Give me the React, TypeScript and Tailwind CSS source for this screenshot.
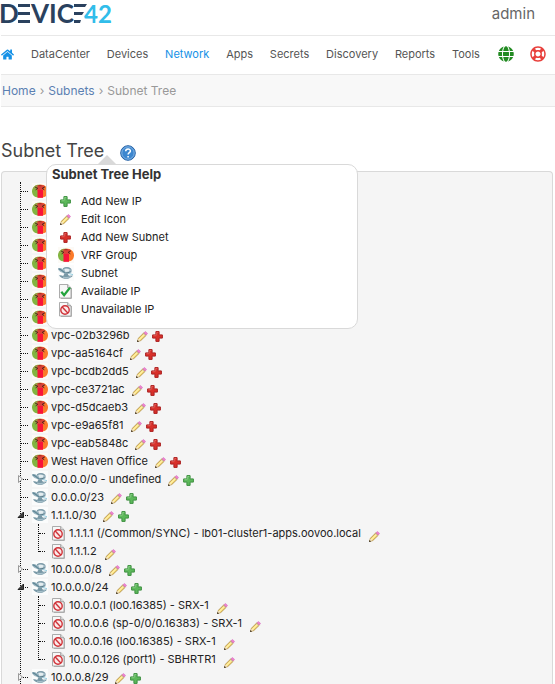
import React from "react";
import { FaHome, FaGlobe, FaRegLifeRing } from "react-icons/fa";

type Leaf = { label: string };
type Kind = "vrf" | "subnet";
type TreeNode = { kind: Kind; label: string; state?: "open" | "closed"; children?: Leaf[] };

const collapsedGroups: TreeNode[] = Array.from({ length: 8 }, () => ({ kind: "vrf", label: "" }));

const nodes: TreeNode[] = [
  ...collapsedGroups,
  { kind: "vrf", label: "vpc-02b3296b" },
  { kind: "vrf", label: "vpc-aa5164cf" },
  { kind: "vrf", label: "vpc-bcdb2dd5" },
  { kind: "vrf", label: "vpc-ce3721ac" },
  { kind: "vrf", label: "vpc-d5dcaeb3" },
  { kind: "vrf", label: "vpc-e9a65f81" },
  { kind: "vrf", label: "vpc-eab5848c" },
  { kind: "vrf", label: "West Haven Office" },
  { kind: "subnet", label: "0.0.0.0/0 - undefined", state: "closed" },
  { kind: "subnet", label: "0.0.0.0/23" },
  {
    kind: "subnet",
    label: "1.1.1.0/30",
    state: "open",
    children: [{ label: "1.1.1.1 (/Common/SYNC) - lb01-cluster1-apps.oovoo.local" }, { label: "1.1.1.2" }],
  },
  { kind: "subnet", label: "10.0.0.0/8", state: "closed" },
  {
    kind: "subnet",
    label: "10.0.0.0/24",
    state: "open",
    children: [
      { label: "10.0.0.1 (lo0.16385) - SRX-1" },
      { label: "10.0.0.6 (sp-0/0/0.16383) - SRX-1" },
      { label: "10.0.0.16 (lo0.16385) - SRX-1" },
      { label: "10.0.0.126 (port1) - SBHRTR1" },
    ],
  },
  { kind: "subnet", label: "10.0.0.8/29", state: "closed" },
];

const navItems = ["DataCenter", "Devices", "Network", "Apps", "Secrets", "Discovery", "Reports", "Tools"];

function Plus({ red = false }: { red?: boolean }) {
  return (
    <svg viewBox="0 0 11 11" className="size-[11px] shrink-0" aria-hidden="true">
      <path
        d="M3.900 .6h3.200v3.300h3.300v3.200H7.100v3.300H3.900V7.100H.6V3.900h3.300z"
        fill={red ? "#d8302a" : "#5cb85a"}
        stroke={red ? "#ac2222" : "#3f9142"}
        strokeLinejoin="round"
      />
      <path d="M4.700 4.300V1.500h1.600M1.500 4.700h2.800" fill="none" stroke={red ? "#e8706a" : "#96d892"} strokeWidth=".7" />
    </svg>
  );
}

function Pencil() {
  return (
    <svg viewBox="0 0 11 11" className="size-[11px] shrink-0" aria-hidden="true">
      <path d="M.6 10.400l.9-3.200L7 1.700l2.400 2.400L3.800 9.500z" fill="#fbe17c" stroke="#b08a3c" strokeWidth=".9" />
      <path d="M2.400 8.300l5.400-5.400" stroke="#fff6bd" strokeWidth=".9" />
      <path d="M.9 10.100l.8-2.700 1.900 1.900z" fill="#f6ead6" />
      <path d="M0 11l.6-2 1.400 1.400z" fill="#2e2520" />
      <path d="M7 1.800L8.500.4l2.100 2.100-1.400 1.500z" fill="#ee82d0" stroke="#d56fc0" strokeWidth=".6" />
      <path d="M6.300 2.500l2.300 2.300" stroke="#b9a8a8" strokeWidth=".8" />
    </svg>
  );
}

function Vrf() {
  return (
    <svg viewBox="0 0 16 16" className="size-4 shrink-0" aria-hidden="true">
      <rect width="16" height="16" fill="#fcfaf6" />
      <path d="M8 1.500C3 1.500 0 4.500 0 8.300s2.500 6.200 6 6.200h2z" fill="#82b540" />
      <path d="M8 1.500c5 0 8 3 8 6.800s-2.500 6.200-6 6.200H8z" fill="#fb7a2a" />
      <path d="M3.500 3C5 1.800 11 1.800 12.500 3L11 7.500H5.500z" fill="#dc4238" />
      <path d="M1 5.500C2 3.500 3.500 2.300 5.500 1.700L5 6z" fill="#97a345" />
      <rect x="5.500" y="7" width="5.500" height="7.800" fill="#f8143a" />
      <path d="M3 4l2.800 1.300L3.600 6.900M13 3.800l-2.800 1.500 2.200 1.600" stroke="#47201a" strokeWidth=".9" fill="none" />
      <path d="M6.500 2.700h3" stroke="#8a2a22" strokeWidth=".8" />
    </svg>
  );
}

function Subnet() {
  return (
    <svg viewBox="0 0 16 16" className="size-4 shrink-0" aria-hidden="true">
      <rect width="16" height="16" fill="#fbfcfc" />
      <path d="M0 3.500c1.800-.8 3.500-.2 4.600.6C6 2 11 1.800 13 3.500c1.300 1.200 1 3.200 0 4.500l-2.500 1H7L4 7.400C2 7.200.4 5.400 0 3.500z" fill="#9eb7c3" />
      <path d="M.6 3.800c2.200.2 3.800 2.600 6.400 4" stroke="#5f8796" strokeWidth="1.200" fill="none" />
      <path d="M5 3.600c2-1.300 5.800-1.300 7.600.3" stroke="#6f8e9c" strokeWidth=".9" fill="none" />
      <path d="M6.300 4.300c1.500-.7 4-.6 5.300.2L11 6.500 7.500 7z" fill="#e4edf0" />
      <path d="M7.500 7.700c1.400.3 3.400 0 5-1.200" stroke="#587c8b" strokeWidth="1" fill="none" />
      <path d="M6.500 8.500h3l1.500 2.600H5.200z" fill="#7898a6" />
      <path d="M1 10.200c2 0 3.500.7 5.500.8l4-.2 4.500-.2c-1.200 1.900-3.300 2.500-5 3.200H6.500C4 13.200 2 12 1 10.200z" fill="#7898a6" />
      <path d="M5 12.200c2.500.5 5.500.3 8-.5" stroke="#c4d9e1" strokeWidth=".7" fill="none" />
      <path d="M11 8.600l4 1" stroke="#8cc9de" strokeWidth=".9" />
    </svg>
  );
}

function Sheet({ available = false }: { available?: boolean }) {
  return (
    <svg viewBox="0 0 13 15" className="h-[15px] w-[13px] shrink-0" aria-hidden="true">
      <path d="M2 14.500h10.500V4" fill="none" stroke="#b4b4b4" />
      <path d="M.5.5h8.200l3.300 3.300v10.200H.5z" fill="#f7f7f7" stroke="#a3a3a3" strokeWidth=".9" />
      <path d="M8.700.5v3.300H12" fill="#dedede" stroke="#8b8b8b" strokeWidth=".8" />
      {available ? (
        <path d="M2.300 7.800l2.800 3.400L11 3.600" fill="none" stroke="#22a33c" strokeWidth="2.300" />
      ) : (
        <g fill="none" stroke="#cf3238" strokeWidth="1.400">
          <circle cx="6" cy="8" r="4.200" fill="#fbe9e9" />
          <path d="M3.200 5.100l5.600 5.800" />
        </g>
      )}
    </svg>
  );
}

function Logo() {
  return (
    <svg viewBox="0 0 112 30" className="h-[30px] w-[112px] overflow-visible" role="img" aria-label="Device42">
      <g fontFamily="Lato, sans-serif" fontSize="26" fontWeight="700" fill="#2a415e">
        <text x="-2" y="23">D</text>
        <text x="30" y="23">VIC</text>
        <text x="83" y="23" fontSize="24" fill="#31bdea">42</text>
      </g>
      <g fill="#2a415e">
        <path d="M17 4h12v3H17zM17 12h12v3H17zM17 20h12v3H17z" />
        <path d="M73 4h13l-2 3H73zM73 12h10l-2 3h-8zM73 20h7l-1 3h-6z" />
      </g>
    </svg>
  );
}

function Expander({ open }: { open: boolean }) {
  return (
    <button type="button" aria-label={open ? "Collapse" : "Expand"} className="absolute -left-[4px] top-[4px] h-[10px] w-2">
      <svg viewBox="0 0 8 10" className="h-[10px] w-2">
        {open ? (
          <path d="M6.500 2v5.500H1z" fill="#404040" stroke="#222" />
        ) : (
          <path d="M1.500 1.500L5.500 5l-4 3.500z" fill="#f5f5f5" stroke="#999" />
        )}
      </svg>
    </button>
  );
}

function EditButton() {
  return (
    <button type="button" aria-label="Edit">
      <Pencil />
    </button>
  );
}

function Row({ node }: { node: TreeNode }) {
  return (
    <li>
      <div className="relative flex h-[18px] items-center">
        {node.state && <Expander open={node.state === "open"} />}
        <span className="mr-1 w-[7px] border-t border-dotted border-[#111]" />
        {node.kind === "vrf" ? <Vrf /> : <Subnet />}
        {node.label && (
          <>
            <span className="ml-[3px] mr-[7px] whitespace-nowrap">{node.label}</span>
            <span className="flex gap-1 pt-[2px]">
              <EditButton />
              <button type="button" aria-label="Add">
                <Plus red={node.kind === "vrf"} />
              </button>
            </span>
          </>
        )}
      </div>
      {node.children && (
        <div className="ml-[17px] flex">
          <span className="mb-2 border-l border-dotted border-[#111]" />
          <ul>
            {node.children.map((leaf) => (
              <li key={leaf.label} className="flex h-[18px] items-center">
                <span className="mr-[7px] w-[6px] border-t border-dotted border-[#111]" />
                <Sheet />
                <span className="ml-1 mr-2 whitespace-nowrap">{leaf.label}</span>
                <span className="flex pt-[6px]">
                  <EditButton />
                </span>
              </li>
            ))}
          </ul>
        </div>
      )}
    </li>
  );
}

const help: [React.ReactNode, string][] = [
  [<Plus />, "Add New IP"],
  [<Pencil />, "Edit Icon"],
  [<Plus red />, "Add New Subnet"],
  [<Vrf />, "VRF Group"],
  [<Subnet />, "Subnet"],
  [<Sheet available />, "Available IP"],
  [<Sheet />, "Unavailable IP"],
];

function HelpPopover() {
  return (
    <div role="tooltip" className="absolute left-[46px] top-[25px] z-10 w-[312px] rounded-[10px] border border-[#d9d9d9] bg-white pb-[10px] pl-[5px] text-[#222]">
      <svg viewBox="0 0 20 10" className="absolute -top-[10px] left-[50px] h-[10px] w-5" aria-hidden="true">
        <path d="M0 10L10 0l10 10z" fill="#d9d9d9" />
      </svg>
      <h2 className="text-[13px] font-bold leading-[18px] text-[#333]">Subnet Tree Help</h2>
      <ul className="pt-[9px]">
        {help.map(([icon, text]) => (
          <li key={text} className="flex h-[18px] items-center gap-2 text-[11px]">
            <span className="flex w-[21px] justify-center pl-[6px]">{icon}</span>
            {text}
          </li>
        ))}
      </ul>
    </div>
  );
}

export default function App() {
  return (
    <div className="flex h-screen flex-col overflow-hidden bg-white pl-px font-['Inter','Liberation_Sans',sans-serif] text-[#555]">
      <header className="flex h-9 shrink-0 items-start justify-between border-b border-[#e8e8e8] pr-5">
        <Logo />
        <button type="button" className="pt-1 text-[15px] leading-5 text-[#666]">admin</button>
      </header>
      <nav className="flex h-[39px] shrink-0 items-center border-b border-[#e8e8e8] pb-[2px] pr-[9px] text-[11px]">
        <a href="#home" aria-label="Home" className="mr-[17px] text-[#1591e6]">
          <FaHome className="size-[13px]" />
        </a>
        <div className="flex flex-1 justify-between">
          {navItems.map((item) => (
            <a key={item} href={"#" + item} className={item === "Network" ? "text-[#1591e6]" : "text-[#555]"}>
              {item}
            </a>
          ))}
        </div>
        <a href="#language" aria-label="Language" className="ml-[18px] text-[#228b22]">
          <FaGlobe className="size-4" />
        </a>
        <a href="#support" aria-label="Support" className="ml-4 text-[#e8403c]">
          <FaRegLifeRing className="size-4" />
        </a>
      </nav>
      <nav aria-label="Breadcrumb" className="flex h-8 shrink-0 items-center gap-1 border-b border-[#e8e8e8] bg-[#f8f8f8] pl-px text-[12px] text-[#999]">
        <a href="#home" className="text-[#5b80b2]">Home</a>
        <span>›</span>
        <a href="#subnets" className="text-[#5b80b2]">Subnets</a>
        <span>›</span>
        <span>Subnet Tree</span>
      </nav>
      <main className="flex min-h-0 flex-1 flex-col pr-[2px] pt-8">
        <div className="relative -ml-px flex h-8 items-start pl-px">
          <h1 className="text-[18px] leading-6 text-[#444]">Subnet Tree</h1>
          <button type="button" aria-label="Help" className="ml-4 mt-[6px]">
            <svg viewBox="0 0 16 16" className="size-4">
              <circle cx="8" cy="8" r="7.300" fill="#3d87cf" stroke="#2762a5" />
              <circle cx="8" cy="8" r="6.200" fill="none" stroke="#8fbdea" strokeWidth=".8" />
              <path d="M5.700 6.300c0-3 4.700-3 4.700-.3 0 1.700-2.300 1.700-2.300 3.500M8.100 11v1.500" fill="none" stroke="#fff" strokeWidth="1.500" />
            </svg>
          </button>
          <HelpPopover />
        </div>
        <section className="min-h-0 flex-1 overflow-hidden rounded-t border border-b-0 border-[#d9d9d9] bg-[#f5f5f5] pl-[18px] pt-[10px] text-[11px] leading-[18px] text-[#222]">
          <ul className="border-l border-dotted border-[#111]">
            {nodes.map((node, i) => (
              <Row key={i} node={node} />
            ))}
          </ul>
        </section>
      </main>
    </div>
  );
}
